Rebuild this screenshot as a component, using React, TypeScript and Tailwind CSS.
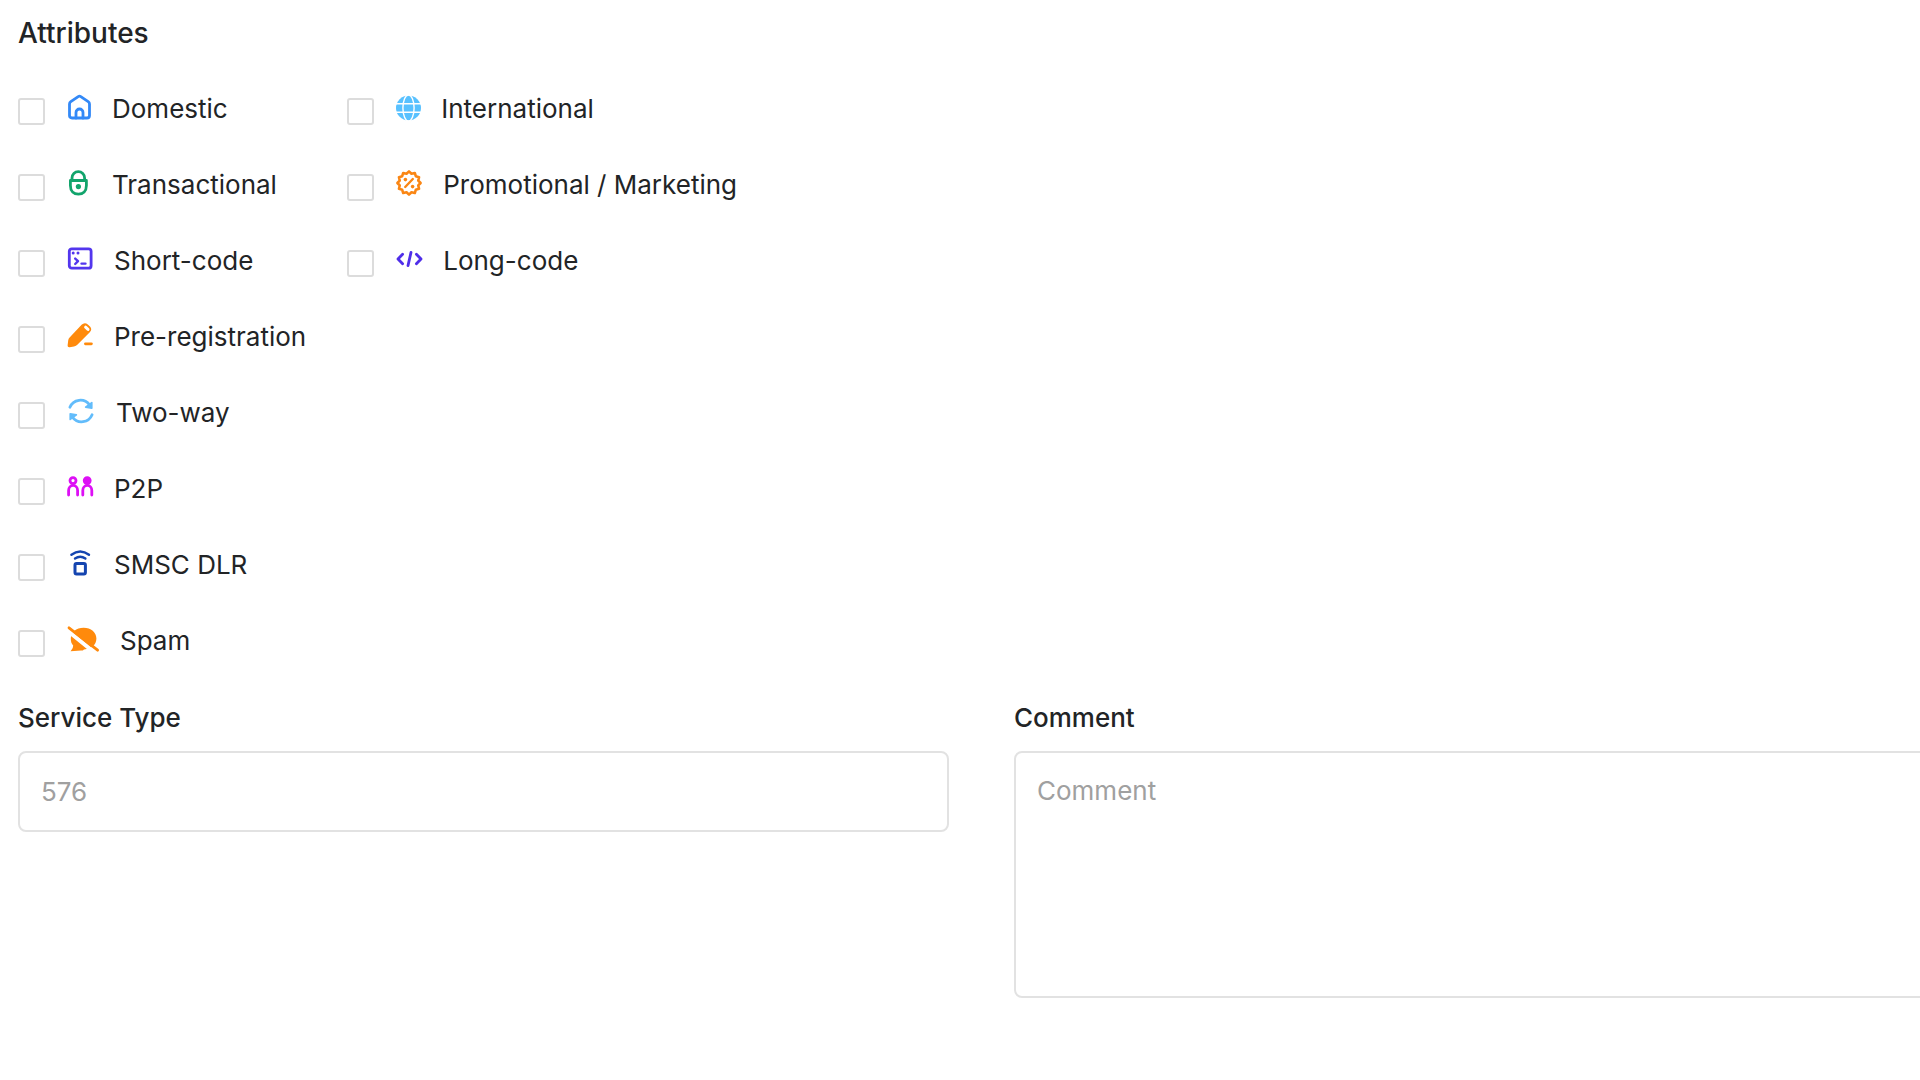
import { useId, type ReactNode } from "react";

type IconProps = { width: number; color: string; children: ReactNode };

function Icon({ width, color, children }: IconProps) {
  return (
    <svg
      width={width}
      height={26}
      viewBox={`0 0 ${width} 26`}
      fill="none"
      stroke={color}
      strokeWidth={2.8}
      strokeLinecap="round"
      strokeLinejoin="round"
      aria-hidden="true"
      className="shrink-0 overflow-visible"
    >
      {children}
    </svg>
  );
}

const HomeIcon = () => (
  <Icon width={24} color="#3389f7">
    <path d="M2.5 10Q2.5 8.5 3.8 7.6L11.2 2.6Q12.5 1.8 13.8 2.6L21.2 7.6Q22.5 8.5 22.5 10V21.5Q22.5 24 20 24H5Q2.5 24 2.5 21.5Z" />
    <path d="M9 24V18.5A3.5 3.5 0 0 1 16 18.5V24" />
  </Icon>
);

const LockIcon = () => (
  <Icon width={24} color="#12a46c">
    <path d="M5 10V8a6.3 6.3 0 0 1 12.6 0V10" />
    <path d="M3.4 10.5H19.4V15.5C19.4 21 16 24.2 11.4 24.2S3.4 21 3.4 15.5Z" />
    <circle cx="11.4" cy="16.6" r="2.6" fill="#12a46c" stroke="none" />
  </Icon>
);

const GlobeIcon = () => (
  <Icon width={24} color="#ffffff">
    <circle cx="12.5" cy="14" r="12.5" fill="#58c1ff" stroke="none" />
    <ellipse cx="12.5" cy="14" rx="5.6" ry="13" strokeWidth="1.4" />
    <path d="M0 9.8H25M0 18.2H25" strokeWidth="1.4" />
  </Icon>
);

// Scalloped outline with twelve bumps
const badgePoints = Array.from({ length: 24 }, (_, i) => {
  const r = i % 2 === 0 ? 11.6 : 9.6;
  const a = (i * Math.PI) / 12;
  return `${(13 + r * Math.sin(a)).toFixed(2)},${(13 - r * Math.cos(a)).toFixed(2)}`;
}).join(" ");

const DiscountIcon = () => (
  <Icon width={26} color="#fa8614">
    <polygon points={badgePoints} strokeWidth="2.6" />
    <path d="M9.2 17L16.8 9" strokeWidth="2.4" />
    <circle cx="9.4" cy="9.6" r="1.8" fill="#fa8614" stroke="none" />
    <circle cx="16.6" cy="16.6" r="1.8" fill="#fa8614" stroke="none" />
  </Icon>
);

const TerminalIcon = () => (
  <Icon width={26} color="#5336ee">
    <rect x="2.3" y="2.8" width="21.8" height="19.4" rx="2.5" />
    <path d="M8.2 12.6L11 15.2L8.2 18M14.5 17.6H18.5" strokeWidth="2.4" />
    <circle cx="6.2" cy="7" r="1.5" fill="#5336ee" stroke="none" />
    <circle cx="11" cy="7" r="1.5" fill="#5336ee" stroke="none" />
  </Icon>
);

const CodeIcon = () => (
  <Icon width={26} color="#4f2ee9">
    <path d="M6.6 8.2L2 13L6.6 17.8M20.4 8.2L25 13L20.4 17.8M15 6.4L12 19.6" />
  </Icon>
);

const PencilIcon = () => (
  <Icon width={26} color="#ff8a0c">
    <path
      d="M.6 23.4L1.2 18.4Q1.4 16.8 2.6 15.6L14.6 2.8Q17.6 -.2 20.8 2.4L23 4.4Q25.6 7.2 22.8 10.2L10.6 22.4Q9.2 24 7 24.4L2.6 25.2Q.4 25.4 .6 23.4Z"
      fill="#ff8a0c"
      stroke="none"
    />
    <path d="M18.6 5.2L21 7.4" stroke="#ffffff" strokeWidth="3" />
    <path d="M18.4 21.8H24.4" />
  </Icon>
);

const SyncIcon = () => (
  <Icon width={28} color="#62bcfb">
    <path d="M2.9 9.2A11.4 11.4 0 0 1 22.4 6.6M25.1 16.8A11.4 11.4 0 0 1 5.6 19.4" />
    <path d="M24.8 4.6V10.2L18.6 9.2ZM3.2 21.4V15.8L9.4 16.8Z" fill="#62bcfb" strokeWidth="1.6" />
  </Icon>
);

const PeopleIcon = () => (
  <Icon width={26} color="#dd10f5">
    <circle cx="6" cy="6.6" r="3" />
    <circle cx="20.2" cy="6.6" r="3" fill="#dd10f5" />
    <path d="M1.6 21V16.4A4.5 5 0 0 1 10.6 16.4V21M15.8 21V16.4A4.5 5 0 0 1 24.8 16.4V21" />
  </Icon>
);

const SignalIcon = () => (
  <Icon width={26} color="#1545b0">
    <rect x="8" y="13.6" width="10.4" height="10.4" rx="1.5" strokeWidth="3" />
    <path d="M4.4 4.8Q13.2 -2 22 4.8M8 8.6Q13.2 5 18.4 8.6" strokeWidth="2.4" />
  </Icon>
);

const SpamIcon = () => (
  <Icon width={32} color="#ff8a0c">
    <path
      d="M16.6 1.8C24 1.8 29.4 6.4 29.4 12.6C29.4 19 24 23.4 17 23.4Q16 24.6 14 24.6L3.6 25.2Q6.4 22.6 6.2 19.6C4.4 17.8 3.8 15.4 3.8 12.6C3.8 6.4 9.2 1.8 16.6 1.8Z"
      fill="#ff8a0c"
      stroke="none"
    />
    <path d="M-1 3.4L28 27" stroke="#ffffff" strokeWidth="4" />
    <path d="M2 1.8L30.6 24.2" />
  </Icon>
);

const attributes: { label: string; icon: ReactNode; cell: string }[] = [
  { label: "Domestic", icon: <HomeIcon />, cell: "col-start-1" },
  { label: "International", icon: <GlobeIcon />, cell: "col-start-2" },
  { label: "Transactional", icon: <LockIcon />, cell: "col-start-1" },
  { label: "Promotional / Marketing", icon: <DiscountIcon />, cell: "col-start-2" },
  { label: "Short-code", icon: <TerminalIcon />, cell: "col-start-1" },
  { label: "Long-code", icon: <CodeIcon />, cell: "col-start-2" },
  { label: "Pre-registration", icon: <PencilIcon />, cell: "col-start-1" },
  { label: "Two-way", icon: <SyncIcon />, cell: "col-start-1" },
  { label: "P2P", icon: <PeopleIcon />, cell: "col-start-1" },
  { label: "SMSC DLR", icon: <SignalIcon />, cell: "col-start-1" },
  { label: "Spam", icon: <SpamIcon />, cell: "col-start-1" },
];

function AttributeOption({ label, icon, cell }: { label: string; icon: ReactNode; cell: string }) {
  const id = useId();
  return (
    <div className={`flex h-[76px] items-center ${cell}`}>
      <input
        id={id}
        type="checkbox"
        className="mt-1 mr-[22px] size-[27px] shrink-0 appearance-none rounded-[3px] border-2 border-[#dcdcdc] bg-white checked:bg-[#3389f7]"
      />
      <label htmlFor={id} className="flex items-center gap-[21px] whitespace-nowrap">
        <span className="pb-1">{icon}</span>
        {label}
      </label>
    </div>
  );
}

export default function App() {
  return (
    <main className="overflow-hidden bg-white pt-[13px] pb-20 pl-[18px] font-[Inter,sans-serif] text-[26px] leading-10 text-[#222426]">
      <fieldset>
        <legend className="text-[28px] font-medium">Attributes</legend>
        <div className="mt-[18px] grid grid-cols-[max-content_max-content] gap-x-[41px]">
          {attributes.map((attribute) => (
            <AttributeOption key={attribute.label} {...attribute} />
          ))}
        </div>
      </fieldset>

      {/* The second column runs past the right edge of the window */}
      <div className="-mr-[25px] mt-[19px] grid grid-cols-2 items-start gap-[65px]">
        <div className="flex flex-col gap-[13px]">
          <label htmlFor="service-type" className="font-medium">
            Service Type
          </label>
          <input
            id="service-type"
            type="text"
            placeholder="576"
            className="h-[81px] w-full rounded-lg border-2 border-[#e2e2e2] bg-white px-[21px] placeholder:text-[#a0a0a0]"
          />
        </div>
        <div className="flex flex-col gap-[13px]">
          <label htmlFor="comment" className="font-medium">
            Comment
          </label>
          <textarea
            id="comment"
            placeholder="Comment"
            className="h-[247px] w-full resize-none rounded-lg border-2 border-[#e2e2e2] bg-white px-[21px] py-[18px] placeholder:text-[#a0a0a0]"
          />
        </div>
      </div>
    </main>
  );
}
